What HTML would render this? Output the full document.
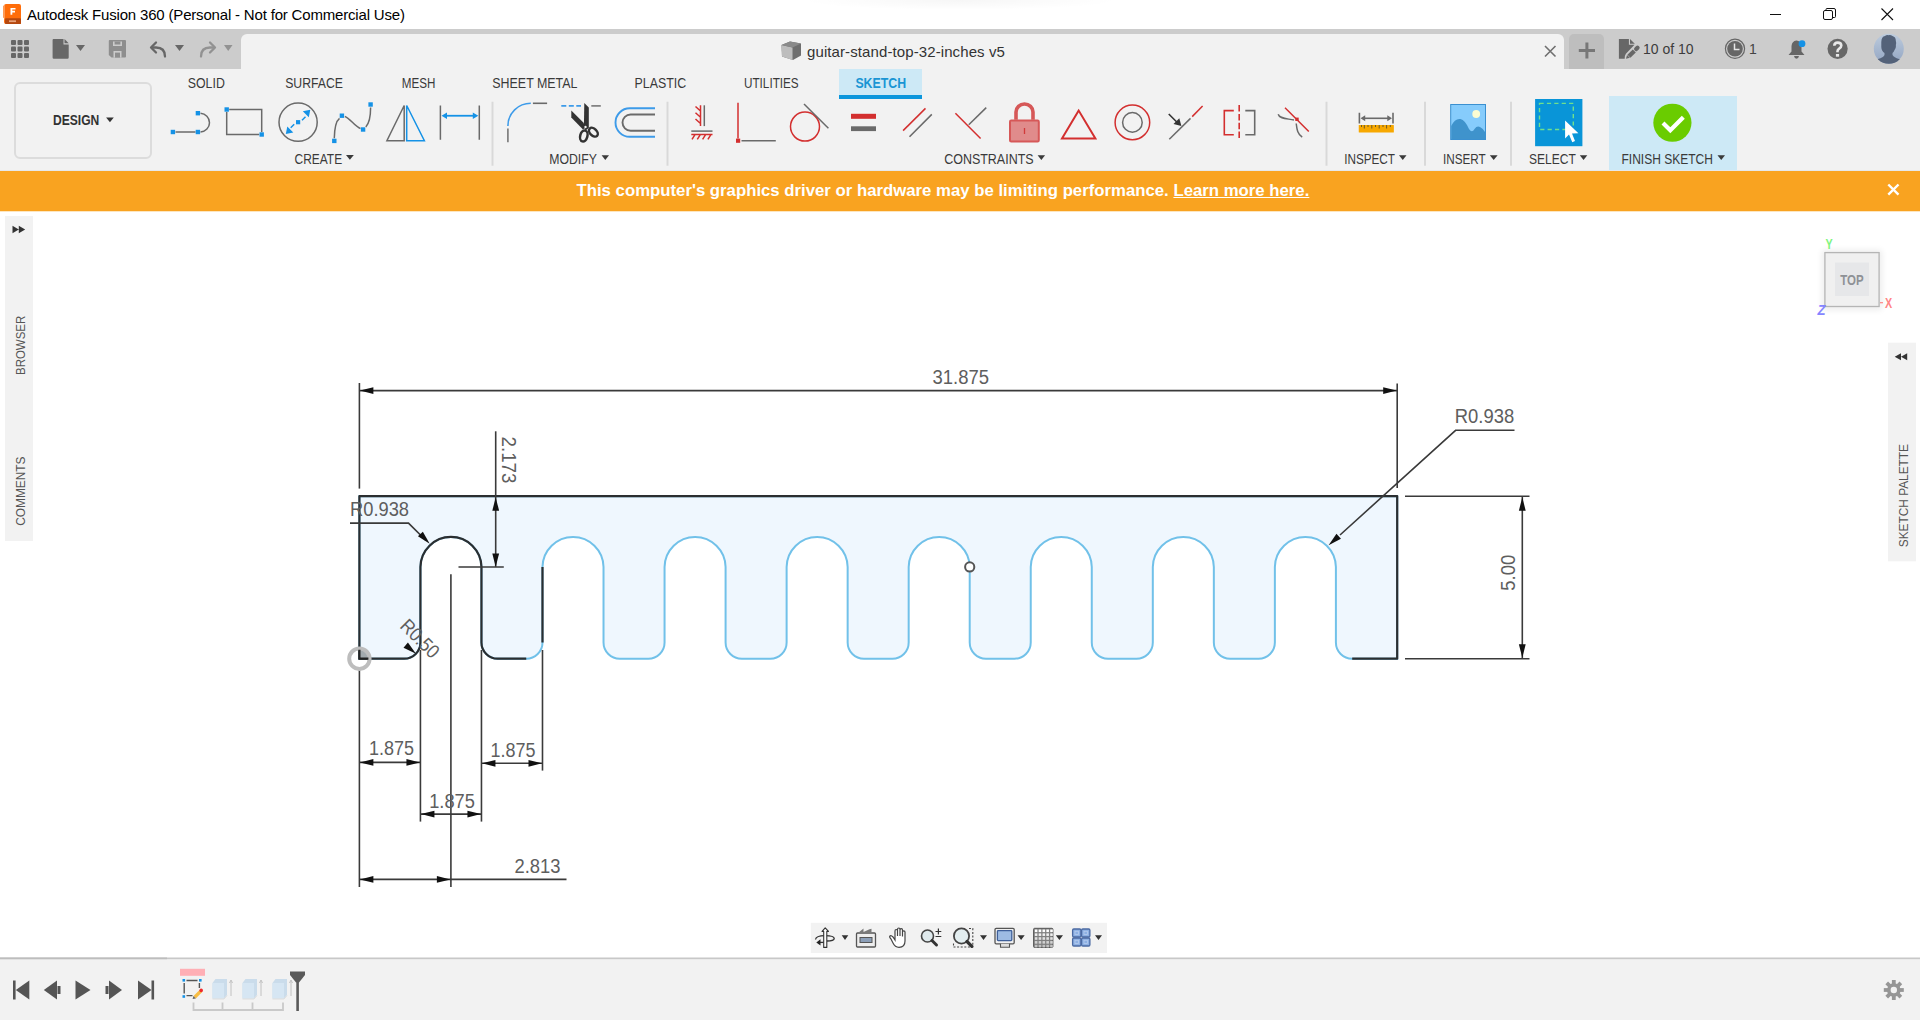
<!DOCTYPE html>
<html><head><meta charset="utf-8">
<style>
*{box-sizing:border-box}
html,body{margin:0;padding:0}
body{width:1920px;height:1020px;position:relative;overflow:hidden;background:#fff;font-family:"Liberation Sans",sans-serif;color:#3c3c3c}
.a{position:absolute}
.t{position:absolute;white-space:nowrap;line-height:1}
#title{left:0;top:0;width:1920px;height:29px;background:#fff}
#tabbar{left:0;top:29px;width:1920px;height:40px;background:#cccccc}
#doctab{left:241px;top:34px;width:1323px;height:35px;background:#f2f2f2;border-radius:6px 6px 0 0}
#plus{left:1569px;top:34px;width:35px;height:35px;background:#bebebe;border-radius:5px 5px 0 0}
#toolbar{left:0;top:69px;width:1920px;height:102px;background:#f2f2f2}
#banner{left:0;top:171px;width:1920px;height:40px;background:#f9a320}
.tab{font-size:13px;color:#3a3a3a;letter-spacing:-0.4px;top:78px}
.lbl{font-size:13px;color:#3a3a3a;letter-spacing:-0.5px;top:153px}
.sep{position:absolute;width:2px;background:#dcdcdc;top:101px;height:64px}
svg{position:absolute;overflow:visible}
</style></head>
<body>
<div id="title" class="a"></div>
<div class="a" style="left:800px;top:0;width:320px;height:10px;background:radial-gradient(ellipse 50% 100% at 50% 0%, rgba(0,0,0,0.035), rgba(0,0,0,0) 100%)"></div>
<div class="t" style="left:27px;top:7px;font-size:15px;color:#000;letter-spacing:-0.18px">Autodesk Fusion 360 (Personal - Not for Commercial Use)</div>

<div id="tabbar" class="a"></div>
<div id="doctab" class="a"></div>
<div id="plus" class="a"></div>
<div class="t" style="left:807px;top:44px;font-size:15px;color:#333;letter-spacing:0.1px">guitar-stand-top-32-inches v5</div>
<div class="t" style="left:1643px;top:42px;font-size:14px;color:#3c3c3c;">10 of 10</div>
<div class="t" style="left:1749px;top:42px;font-size:14px;color:#444;">1</div>

<svg class="a" style="left:0;top:0" width="1920" height="70">
  <!-- fusion logo -->
  <path d="M4.5 5.5 Q4 4 6 4 H19 Q21 4 21 6 V24 H6 Q4 24 4 22 Z" fill="#ff6d0a"/>
  <path d="M3 6 L5 4.5 V19 L3 17.5 Z" fill="#ff9a55"/>
  <rect x="5" y="18.3" width="16" height="5.7" rx="1" fill="#b5480f"/>
  <path d="M10.5 8 H15.5 V9.6 H12.3 V10.8 H15 V12.4 H12.3 V14.8 H10.5 Z" fill="#fff"/>
  <rect x="9" y="20.3" width="7" height="1.8" fill="#e7a27a"/>
  <!-- window controls -->
  <line x1="1770" y1="14.5" x2="1781" y2="14.5" stroke="#111" stroke-width="1"/>
  <rect x="1823.5" y="10.5" width="9" height="9" fill="none" stroke="#111" stroke-width="1" rx="1.5"/>
  <path d="M1826 10.5 V9.5 Q1826 8.5 1827 8.5 H1834 Q1835.5 8.5 1835.5 10 V16.5 Q1835.5 17.5 1834.5 17.5 H1832.5" fill="none" stroke="#111" stroke-width="1"/>
  <path d="M1881.5 8.5 L1893 20 M1893 8.5 L1881.5 20" stroke="#111" stroke-width="1.1"/>
  <!-- grid -->
  <g fill="#676767">
    <rect x="11" y="40" width="5" height="5" rx="1"/><rect x="17.5" y="40" width="5" height="5" rx="1"/><rect x="24" y="40" width="5" height="5" rx="1"/>
    <rect x="11" y="46.5" width="5" height="5" rx="1"/><rect x="17.5" y="46.5" width="5" height="5" rx="1"/><rect x="24" y="46.5" width="5" height="5" rx="1"/>
    <rect x="11" y="53" width="5" height="5" rx="1"/><rect x="17.5" y="53" width="5" height="5" rx="1"/><rect x="24" y="53" width="5" height="5" rx="1"/>
  </g>
  <!-- file -->
  <path d="M53.5 39 H63.5 V44.5 H68.7 V57.5 Q68.7 58.7 67.5 58.7 H53.8 Q52.6 58.7 52.6 57.5 V40 Q52.6 39 53.5 39 Z" fill="#676767"/>
  <path d="M64.5 39 L68.7 43.3 H64.5 Z" fill="#676767"/>
  <path d="M76 45 H85 L80.5 51 Z" fill="#676767"/>
  <!-- save -->
  <path d="M109.5 40 H125 Q126 40 126 41 V56.6 Q126 57.6 125 57.6 H111.5 L108.8 55 V41 Q108.8 40 109.5 40 Z" fill="#8e8e8e"/>
  <rect x="113" y="41.5" width="9" height="4.5" fill="#cbcbcb"/><rect x="114.6" y="41.5" width="5.8" height="3" fill="#8e8e8e"/>
  <rect x="113.5" y="51" width="8" height="6.6" fill="#cbcbcb"/><rect x="115" y="52.6" width="5" height="5" fill="#8e8e8e"/>
  <!-- undo -->
  <path d="M165 56.5 Q165 47.5 156 47.5 H152" fill="none" stroke="#676767" stroke-width="2.3" stroke-linecap="round"/>
  <path d="M156 42.5 L151 47.5 L156 52.5" fill="none" stroke="#676767" stroke-width="2.3" stroke-linecap="round" stroke-linejoin="round"/>
  <path d="M175 45 H184 L179.5 51 Z" fill="#676767"/>
  <!-- redo -->
  <path d="M201 56.5 Q201 47.5 210 47.5 H214" fill="none" stroke="#929292" stroke-width="2.3" stroke-linecap="round"/>
  <path d="M210 42.5 L215 47.5 L210 52.5" fill="none" stroke="#929292" stroke-width="2.3" stroke-linecap="round" stroke-linejoin="round"/>
  <path d="M224 45 H232.5 L228.2 51 Z" fill="#929292"/>
  <!-- doc tab cube -->
  <path d="M781.5 45 L790 41.5 L801 43.5 V55.5 L793 60 L782 56.5 Z" fill="#6e6e6e"/>
  <path d="M781.5 45 L792.5 47.5 V60 L782 56.5 Z" fill="#bdbdbd"/>
  <path d="M781.5 45 L790 41.5 L801 43.5 L792.5 47.5 Z" fill="#8a8a8a"/>
  <!-- tab close -->
  <path d="M1545 46 L1555.5 56.5 M1555.5 46 L1545 56.5" stroke="#707070" stroke-width="1.6"/>
  <!-- plus -->
  <path d="M1578.8 50.5 H1595 M1586.9 42.6 V58.5" stroke="#777" stroke-width="3"/>
  <!-- file edit icon -->
  <path d="M1618.9 39 H1628.9 V44.8 H1634.5 L1625.9 53.8 Q1624.7 55.3 1624.7 58.8 H1618.9 Z" fill="#676767"/>
  <path d="M1630 39 L1634.8 43.7 H1630 Z" fill="#676767"/>
  <path d="M1628.9 56.3 L1634.3 50.9" stroke="#676767" stroke-width="4.3"/>
  <path d="M1636.2 49.1 L1637.5 47.8" stroke="#676767" stroke-width="4.3" stroke-linecap="round"/>
  <path d="M1626 58.8 L1627 55 L1629.9 57.8 Z" fill="#676767"/>
  <!-- clock -->
  <circle cx="1735" cy="48.8" r="9.6" fill="none" stroke="#666" stroke-width="1.2"/>
  <circle cx="1735" cy="48.8" r="7.8" fill="#666"/>
  <path d="M1734.5 43.5 V49.5 H1739.5" fill="none" stroke="#e6e6e6" stroke-width="1.5"/>
  <!-- bell -->
  <path d="M1796.3 40.5 Q1792 41 1791.5 46 V51.5 L1788.5 55 H1804.5 L1801.5 51.5 V46 Q1801 41 1796.5 40.5 Z" fill="#666"/>
  <path d="M1794 56 H1799 Q1798.5 58.7 1796.5 58.7 Q1794.5 58.7 1794 56 Z" fill="#666"/>
  <circle cx="1802" cy="43.7" r="3.4" fill="#1592e6"/>
  <!-- help -->
  <circle cx="1837.6" cy="48.8" r="10.1" fill="#676767"/>
  <path d="M1834.3 45.8 Q1834.3 42.6 1837.7 42.6 Q1841.3 42.6 1841.3 45.6 Q1841.3 47.4 1839.2 48.6 Q1837.5 49.6 1837.5 51.2 V52.3" fill="none" stroke="#e8e8e8" stroke-width="2.6"/>
  <rect x="1835.9" y="54" width="3.2" height="2.7" fill="#e8e8e8"/>
  <!-- avatar -->
  <defs><clipPath id="av"><circle cx="1888.8" cy="48.8" r="15"/></clipPath>
  <linearGradient id="avg" x1="0" y1="0" x2="0" y2="1"><stop offset="0" stop-color="#bccbdd"/><stop offset="1" stop-color="#93a5c2"/></linearGradient></defs>
  <circle cx="1888.8" cy="48.8" r="15" fill="url(#avg)"/>
  <g clip-path="url(#av)" fill="#546279">
    <path d="M1881.3 42 Q1881.5 36.5 1885 36 Q1886.5 34.8 1888.5 35.2 Q1890.5 34.6 1892.5 36 Q1896 37 1895.8 41 Q1896.5 43 1895.8 45 Q1896.3 47.5 1894.8 49.5 Q1893.8 52 1892.5 53 V55 Q1894 57.5 1899 59 L1905 60 V66 H1872 V60 L1878 59 Q1883.5 57.5 1884.5 55 V53 Q1881.5 51 1881.3 47 Z"/>
  </g>
</svg>

<div id="toolbar" class="a"></div>
<div class="a" style="left:14px;top:82px;width:138px;height:77px;border:2px solid #dcdcdc;border-radius:6px"></div>

<div class="a" style="left:839px;top:69px;width:83px;height:30px;background:#cde9f6"></div>
<div class="a" style="left:839px;top:95px;width:83px;height:4px;background:#0b96dc"></div>

<div class="a" style="left:1609px;top:96px;width:128px;height:75px;background:#cde9f6"></div>


<svg class="a" style="left:0;top:0" width="1920" height="175" font-family="Liberation Sans">
<g fill="#3a3a3a" font-size="13.8">
  <text x="52.9" y="124.85" font-weight="700" font-size="13.8" textLength="46.4" lengthAdjust="spacingAndGlyphs" fill="#333">DESIGN</text>
  <path d="M106.1 117.6 H113.8 L109.95 122.2 Z" fill="#333"/>
  <text x="187.8" y="87.65" font-size="14" textLength="37" lengthAdjust="spacingAndGlyphs">SOLID</text>
  <text x="285.2" y="87.65" font-size="14" textLength="57.8" lengthAdjust="spacingAndGlyphs">SURFACE</text>
  <text x="401.7" y="87.65" font-size="14" textLength="33.6" lengthAdjust="spacingAndGlyphs">MESH</text>
  <text x="492.3" y="87.65" font-size="14" textLength="85.2" lengthAdjust="spacingAndGlyphs">SHEET METAL</text>
  <text x="634.5" y="87.65" font-size="14" textLength="51.6" lengthAdjust="spacingAndGlyphs">PLASTIC</text>
  <text x="744" y="87.65" font-size="14" textLength="54.7" lengthAdjust="spacingAndGlyphs">UTILITIES</text>
  <text x="855.4" y="87.65" font-size="14" font-weight="700" textLength="50.7" lengthAdjust="spacingAndGlyphs" fill="#1a95d4">SKETCH</text>

  <text x="294.6" y="163.75" textLength="47.5" lengthAdjust="spacingAndGlyphs">CREATE</text>
  <path d="M346 155 H353.8 L349.9 159.8 Z"/>
  <text x="549.2" y="163.75" textLength="47.7" lengthAdjust="spacingAndGlyphs">MODIFY</text>
  <path d="M601.6 155.2 H609 L605.3 159.9 Z"/>
  <text x="944.2" y="163.75" textLength="89.4" lengthAdjust="spacingAndGlyphs">CONSTRAINTS</text>
  <path d="M1037.6 155.2 H1045.1 L1041.35 159.9 Z"/>
  <text x="1344.2" y="163.75" textLength="50.8" lengthAdjust="spacingAndGlyphs">INSPECT</text>
  <path d="M1399 155.2 H1406.5 L1402.75 159.9 Z"/>
  <text x="1443" y="163.75" textLength="42.7" lengthAdjust="spacingAndGlyphs">INSERT</text>
  <path d="M1489.8 155.2 H1497.6 L1493.7 159.9 Z"/>
  <text x="1529" y="163.75" textLength="46.8" lengthAdjust="spacingAndGlyphs">SELECT</text>
  <path d="M1579.8 155.2 H1587.3 L1583.55 159.9 Z"/>
  <text x="1621.5" y="163.75" textLength="91.4" lengthAdjust="spacingAndGlyphs">FINISH SKETCH</text>
  <path d="M1717.5 155.2 H1725 L1721.25 159.9 Z"/>
</g>
<!-- CREATE icons -->
<g fill="none" stroke="#6a6a6a" stroke-width="1.5">
  <line x1="175.5" y1="132" x2="195.5" y2="132"/>
  <path d="M200.5 113.25 A9.7 9.4 0 0 1 200.5 132"/>
  <path d="M229.2 109.5 H261.7 V132 M259.2 134.5 H226.7 V112"/>
  <circle cx="298.1" cy="122.2" r="19.1"/>
  <path d="M334.3 138.3 C334.5 128 336 121 339.5 118.3"/>
  <path d="M344.8 116.5 C350 118 355 127 360.5 128.5"/>
  <path d="M365.8 127 C369.5 123 370.6 116 370.6 107.5"/>
  <path d="M404.2 105.5 L386.9 140.7 H404.2 Z"/>
  <path d="M440.4 105.5 V139.7 M479.3 105.5 V139.7"/>
</g>
<g fill="#1592e6">
  <rect x="170.7" y="129.8" width="4.4" height="4.4"/><rect x="195.7" y="129.8" width="4.4" height="4.4"/><rect x="195.7" y="111" width="4.4" height="4.4"/>
  <rect x="224.5" y="107.3" width="4.4" height="4.4"/><rect x="259.5" y="132.3" width="4.4" height="4.4"/>
  <rect x="296" y="120.1" width="4.2" height="4.2"/>
  <path d="M310.3 109.8 L308.8 117.3 L302.8 111.3 Z M285.8 134 L287.3 126.5 L293.3 132.5 Z"/>
  <rect x="332.1" y="138.7" width="4.4" height="4.4"/><rect x="339.7" y="113.5" width="4.4" height="4.4"/><rect x="360.9" y="127.3" width="4.4" height="4.4"/><rect x="368.4" y="102.3" width="4.4" height="4.4"/>
  <path d="M441.5 115.75 L447 112.6 V118.9 Z M478.3 115.75 L472.8 112.6 V118.9 Z"/>
</g>
<g fill="none" stroke="#1592e6" stroke-width="1.5">
  <path d="M302 120.3 L305.5 116.8 M294.2 124.2 L290.7 127.7"/>
  <path d="M406.7 105.5 V140.7 H424.4 Z"/>
  <line x1="446" y1="115.75" x2="474" y2="115.75" stroke-width="1.8"/>
</g>
<!-- separators -->
<g fill="#d9d9d9">
  <rect x="491.5" y="101.7" width="2" height="64"/>
  <rect x="666.5" y="101.7" width="2" height="64"/>
  <rect x="1325.5" y="101.7" width="2" height="64"/>
  <rect x="1424" y="101.7" width="2" height="64"/>
  <rect x="1510" y="101.7" width="2" height="64"/>
</g>
<!-- MODIFY icons -->
<g fill="none" stroke-width="1.6">
  <path d="M507.9 128.5 V142.2" stroke="#777"/>
  <path d="M507.9 125.9 A22.9 22.6 0 0 1 530.8 103.3" stroke="#3d9be9"/>
  <path d="M532.9 103.3 H547.1" stroke="#6a6a6a"/>
  <path d="M561.3 105.9 H581" stroke="#3d9be9" stroke-dasharray="5 2.5"/>
  <path d="M591.3 105.9 H600.8" stroke="#777"/>
  <path d="M655 108.3 H629.7 A14.2 14.25 0 0 0 629.7 136.8 H655" stroke="#3d9be9" stroke-width="1.9"/>
  <path d="M655 114.5 H630.6 A8.1 8.1 0 0 0 630.6 130.7 H655" stroke="#6a6a6a" stroke-width="1.9"/>
</g>
<g fill="#333">
  <path d="M584.3 103 L588.8 107.5 V128 L585.5 130.5 L583.9 127 Z"/>
  <path d="M571.3 110.5 L583.3 122.5 L585.8 127 L583 129.5 L571.3 117.5 Z"/>
</g>
<g fill="none" stroke="#333" stroke-width="2.5">
  <ellipse cx="583.8" cy="136" rx="3.6" ry="5.6" transform="rotate(15 583.8 136)"/>
  <ellipse cx="593.4" cy="132.2" rx="3.4" ry="5.2" transform="rotate(-45 593.4 132.2)"/>
</g>
<circle cx="585.5" cy="127" r="1.2" fill="#f1f1f1"/>
<!-- CONSTRAINT icons -->
<g fill="none" stroke="#d32f2f" stroke-width="1.5">
  <path d="M700.5 105.3 V126.1 M695.5 106.5 L700.5 111 M695.5 112.7 L700.5 117.2 M695.5 119 L700.5 123.5"/>
  <path d="M691.3 134.5 H712.5 M695 134.7 L692 139.4 M700.3 134.7 L697.3 139.4 M705.6 134.7 L702.6 139.4 M710.9 134.7 L707.9 139.4"/>
  <path d="M738 102.7 V138.5"/>
  <circle cx="805" cy="126.6" r="14.5"/>
  <path d="M903.1 130.6 L925.5 108.4"/>
  <path d="M955.4 113.3 L980.6 138.5"/>
  <path d="M1078.7 110.6 L1062 138.5 H1095.4 Z" stroke-width="2"/>
  <circle cx="1132.4" cy="122.4" r="17.3"/>
  <path d="M1192.2 116.6 L1202.6 106"/>
  <path d="M1233.8 110.6 H1224.3 V134.7 H1233.8" stroke-width="1.6"/>
  <path d="M1239.2 105.1 V139.8" stroke-dasharray="6.5 2.3" stroke-width="1.6"/>
  <path d="M1285 107.7 L1308.8 131.5"/>
</g>
<g fill="none" stroke="#6a6a6a" stroke-width="1.5">
  <path d="M704.3 105.3 V126.1"/>
  <path d="M691.3 131.1 H712.5"/>
  <path d="M741.5 140.7 H775.8"/>
  <path d="M804 104 L828.4 128.2"/>
  <path d="M909.5 136.8 L931.8 114.4"/>
  <path d="M968.75 124.8 L986.25 107.6"/>
  <circle cx="1132.4" cy="122.4" r="9.8"/>
  <path d="M1169.3 139.25 L1190.5 118.4"/>
  <path d="M1245.3 110.6 H1254.7 V134.7 H1245.3" stroke-width="1.6"/>
  <path d="M1278.2 114.3 C1279.5 119 1287 118.5 1294 120"/>
  <path d="M1296.2 123.5 C1297 130 1297.5 134 1302.2 137.2"/>
</g>
<rect x="1232.3" y="110" width="4" height="6" fill="#f1f1f1" opacity="0"/>
<rect x="736" y="138.6" width="4.2" height="4.2" fill="#d32f2f"/>
<rect x="851" y="113.8" width="25" height="5" fill="#d32f2f"/>
<rect x="851" y="126.3" width="25" height="4.8" fill="#6a6a6a"/>
<rect x="1295.3" y="117.6" width="3.4" height="3.4" fill="#d32f2f"/>
<path d="M1168.75 114 L1177 122.3" stroke="#333" stroke-width="1.6"/>
<path d="M1181.4 126.1 L1173.5 124 L1179.3 118.2 Z" fill="#333"/>
<!-- lock -->
<path d="M1016 119.7 V112 A8.5 8 0 0 1 1033 112 V119.7" fill="none" stroke="#d65858" stroke-width="3.6"/>
<rect x="1010" y="120.5" width="28.8" height="21" rx="1.2" fill="#e08b8b" stroke="#d65858" stroke-width="2"/>
<path d="M1024.5 128 V134" stroke="#d23a3a" stroke-width="1.3"/>
<!-- INSPECT -->
<g stroke="#6a6a6a" fill="none" stroke-width="1.6">
  <path d="M1359.4 112.8 V123.5 M1393 112.8 V123.5"/>
  <path d="M1364 118.3 H1388.5"/>
</g>
<path d="M1360.5 118.3 L1365.2 115.3 V121.3 Z M1392 118.3 L1387.3 115.3 V121.3 Z" fill="#6a6a6a"/>
<rect x="1358.75" y="125" width="35.1" height="7.6" rx="0.6" fill="#f7a800"/>
<g stroke="#6b5a2a" stroke-width="1">
  <path d="M1361.5 125 V127 M1364.3 125 V128.5 M1368 125 V127 M1371.8 125 V128.5 M1375.5 125 V127 M1379.2 125 V128.5 M1383 125 V127 M1386.6 125 V128.5 M1390.3 125 V127"/>
</g>
<!-- INSERT -->
<rect x="1450.7" y="104.5" width="34.8" height="35" fill="#86ccfc" stroke="#3b90d0" stroke-width="1"/>
<path d="M1451.2 126 Q1455 118 1460.5 119 Q1465 120 1469 129 Q1472 133.5 1474.5 129 Q1477 125.5 1480 127 Q1483 128.5 1485 132 V139 H1451.2 Z" fill="#3f93cc"/>
<circle cx="1476.2" cy="114" r="3.9" fill="#fcfdd2"/>
<!-- SELECT -->
<rect x="1535.1" y="99" width="47.3" height="47.2" fill="#0995d8"/>
<rect x="1539.5" y="103.4" width="33.8" height="26.1" fill="none" stroke="#70e08c" stroke-width="1.4" stroke-dasharray="4.2 3.2"/>
<path d="M1565.1 120.6 V138.4 L1569 134.6 L1572.3 142.2 L1575 141 L1572 133.5 L1578.4 133.3 Z" fill="#fff"/>
<!-- FINISH -->
<circle cx="1672.4" cy="122.75" r="19.1" fill="#6acc00"/>
<path d="M1663 123 L1670.3 130.2 L1683.3 117.2" fill="none" stroke="#fff" stroke-width="4.2"/>
</svg>

<div id="banner" class="a"></div>
<div class="a" style="left:0;top:170px;width:1920px;height:1px;background:#e6e8ea"></div>
<div class="a" style="left:0;top:211px;width:1920px;height:1px;background:#fde6c0"></div>
<div class="t" style="left:576.5px;top:183px;font-size:16.75px;font-weight:700;color:#fff">This computer's graphics driver or hardware may be limiting performance. <span style="text-decoration:underline">Learn more here.</span></div>


<svg class="a" style="left:0;top:0" width="1920" height="1020" font-family="Liberation Sans">
<path d="M359.40 496.20 H1397.20 V658.70 H1352.17 A16.27 16.27 0 0 1 1335.90 642.43 V566.93 A30.52 30.52 0 0 0 1274.87 566.93 V642.43 A16.27 16.27 0 0 1 1258.59 658.70 H1230.11 A16.27 16.27 0 0 1 1213.84 642.43 V566.93 A30.52 30.52 0 0 0 1152.81 566.93 V642.43 A16.27 16.27 0 0 1 1136.53 658.70 H1108.05 A16.27 16.27 0 0 1 1091.77 642.43 V566.93 A30.52 30.52 0 0 0 1030.74 566.93 V642.43 A16.27 16.27 0 0 1 1014.47 658.70 H985.99 A16.27 16.27 0 0 1 969.71 642.43 V566.93 A30.52 30.52 0 0 0 908.68 566.93 V642.43 A16.27 16.27 0 0 1 892.41 658.70 H863.92 A16.27 16.27 0 0 1 847.65 642.43 V566.93 A30.52 30.52 0 0 0 786.62 566.93 V642.43 A16.27 16.27 0 0 1 770.34 658.70 H741.86 A16.27 16.27 0 0 1 725.59 642.43 V566.93 A30.52 30.52 0 0 0 664.56 566.93 V642.43 A16.27 16.27 0 0 1 648.28 658.70 H619.80 A16.27 16.27 0 0 1 603.52 642.43 V566.93 A30.52 30.52 0 0 0 542.49 566.93 V642.43 A16.27 16.27 0 0 1 526.22 658.70 H497.74 A16.27 16.27 0 0 1 481.46 642.43 V566.93 A30.52 30.52 0 0 0 420.43 566.93 V642.43 A16.27 16.27 0 0 1 404.16 658.70 H359.40 Z" fill="#eff7fe" stroke="#71c1e9" stroke-width="2"/>
<path d="M1352.20 658.70 H1397.20 V496.20 H359.40 V658.70 H404.16 A16.27 16.27 0 0 0 420.43 642.43 V566.93 A30.52 30.52 0 0 1 481.46 566.93 V642.43 A16.27 16.27 0 0 0 497.74 658.70 H526.22 M542.49 566.93 V642.43" fill="none" stroke="#2b2e30" stroke-width="2.2" stroke-linejoin="round"/>
<line x1="359.40" y1="383.00" x2="359.40" y2="488.60" stroke="#3a3a3a" stroke-width="1.6"/>
<line x1="1397.20" y1="383.50" x2="1397.20" y2="488.00" stroke="#3a3a3a" stroke-width="1.6"/>
<line x1="359.40" y1="390.60" x2="1397.20" y2="390.60" stroke="#3a3a3a" stroke-width="1.6"/>
<path d="M359.90 390.60 L373.40 387.20 L373.40 394.00 Z" fill="#111"/>
<path d="M1396.70 390.60 L1383.20 394.00 L1383.20 387.20 Z" fill="#111"/>
<text x="932.50" y="383.80" font-size="19.5" fill="#5e5e5e" textLength="56.5" lengthAdjust="spacingAndGlyphs">31.875</text>
<line x1="495.70" y1="431.30" x2="495.70" y2="566.93" stroke="#3a3a3a" stroke-width="1.6"/>
<path d="M495.70 497.20 L499.10 510.70 L492.30 510.70 Z" fill="#111"/>
<path d="M495.70 566.93 L492.30 553.43 L499.10 553.43 Z" fill="#111"/>
<line x1="458.50" y1="566.93" x2="503.80" y2="566.93" stroke="#3a3a3a" stroke-width="1.6"/>
<text x="502.00" y="436.50" font-size="19.5" fill="#5e5e5e" textLength="47" lengthAdjust="spacingAndGlyphs" transform="rotate(90 502.00 436.50)">2.173</text>
<path d="M350 523.1 H408.5 L426 540.5" fill="none" stroke="#3a3a3a" stroke-width="1.6"/>
<path d="M429.70 543.80 L417.93 536.37 L422.85 531.68 Z" fill="#111"/>
<text x="350.00" y="516.30" font-size="19.5" fill="#5e5e5e" textLength="59" lengthAdjust="spacingAndGlyphs">R0.938</text>
<path d="M1514.5 430.3 H1455.6 L1340 535" fill="none" stroke="#3a3a3a" stroke-width="1.6"/>
<path d="M1328.60 545.20 L1336.46 533.71 L1340.96 538.80 Z" fill="#111"/>
<text x="1454.80" y="423.10" font-size="19.5" fill="#5e5e5e" textLength="59.4" lengthAdjust="spacingAndGlyphs">R0.938</text>
<line x1="1405.00" y1="496.20" x2="1529.50" y2="496.20" stroke="#3a3a3a" stroke-width="1.6"/>
<line x1="1405.00" y1="658.70" x2="1529.50" y2="658.70" stroke="#3a3a3a" stroke-width="1.6"/>
<line x1="1522.30" y1="496.20" x2="1522.30" y2="658.70" stroke="#3a3a3a" stroke-width="1.6"/>
<path d="M1522.30 497.20 L1525.70 510.70 L1518.90 510.70 Z" fill="#111"/>
<path d="M1522.30 657.70 L1518.90 644.20 L1525.70 644.20 Z" fill="#111"/>
<text x="1515.50" y="590.70" font-size="19.5" fill="#5e5e5e" textLength="36" lengthAdjust="spacingAndGlyphs" transform="rotate(-90 1515.50 590.70)">5.00</text>
<path d="M416.00 653.80 L403.51 647.65 L407.92 642.47 Z" fill="#111"/>
<text x="399.00" y="627.00" font-size="19.5" fill="#5e5e5e" textLength="46" lengthAdjust="spacingAndGlyphs" transform="rotate(45 399.00 627.00)">R0.50</text>
<line x1="450.90" y1="574.30" x2="450.90" y2="887.00" stroke="#3a3a3a" stroke-width="1.6"/>
<line x1="359.40" y1="667.00" x2="359.40" y2="887.00" stroke="#3a3a3a" stroke-width="1.6"/>
<line x1="420.43" y1="650.00" x2="420.43" y2="821.60" stroke="#3a3a3a" stroke-width="1.6"/>
<line x1="481.46" y1="650.00" x2="481.46" y2="821.60" stroke="#3a3a3a" stroke-width="1.6"/>
<line x1="542.49" y1="650.00" x2="542.49" y2="770.60" stroke="#3a3a3a" stroke-width="1.6"/>
<line x1="359.40" y1="762.40" x2="420.43" y2="762.40" stroke="#3a3a3a" stroke-width="1.6"/>
<path d="M359.90 762.40 L373.40 759.00 L373.40 765.80 Z" fill="#111"/>
<path d="M419.93 762.40 L406.43 765.80 L406.43 759.00 Z" fill="#111"/>
<text x="369.00" y="754.90" font-size="19.5" fill="#5e5e5e" textLength="45" lengthAdjust="spacingAndGlyphs">1.875</text>
<line x1="481.46" y1="763.30" x2="542.49" y2="763.30" stroke="#3a3a3a" stroke-width="1.6"/>
<path d="M481.96 763.30 L495.46 759.90 L495.46 766.70 Z" fill="#111"/>
<path d="M541.99 763.30 L528.49 766.70 L528.49 759.90 Z" fill="#111"/>
<text x="490.60" y="756.50" font-size="19.5" fill="#5e5e5e" textLength="45" lengthAdjust="spacingAndGlyphs">1.875</text>
<line x1="420.43" y1="814.10" x2="481.46" y2="814.10" stroke="#3a3a3a" stroke-width="1.6"/>
<path d="M420.93 814.10 L434.43 810.70 L434.43 817.50 Z" fill="#111"/>
<path d="M480.96 814.10 L467.46 817.50 L467.46 810.70 Z" fill="#111"/>
<text x="429.20" y="807.50" font-size="19.5" fill="#5e5e5e" textLength="45.7" lengthAdjust="spacingAndGlyphs">1.875</text>
<line x1="359.40" y1="879.40" x2="566.50" y2="879.40" stroke="#3a3a3a" stroke-width="1.6"/>
<path d="M359.90 879.40 L373.40 876.00 L373.40 882.80 Z" fill="#111"/>
<path d="M450.40 879.40 L436.90 882.80 L436.90 876.00 Z" fill="#111"/>
<text x="514.50" y="873.00" font-size="19.5" fill="#5e5e5e" textLength="46" lengthAdjust="spacingAndGlyphs">2.813</text>
<path d="M359.40 658.70 V648.70 A10 10 0 0 1 369.40 658.70 Z" fill="#a3aaae"/>
<circle cx="359.40" cy="658.70" r="10.2" fill="none" stroke="#bdbdbd" stroke-width="4"/>
<path d="M359.40 649.70 V658.70 H368.40" fill="none" stroke="#222" stroke-width="2.2"/>
<circle cx="969.71" cy="566.93" r="4.6" fill="#fff" stroke="#555" stroke-width="2"/>
</svg>
<svg class="a" style="left:0;top:0" width="1920" height="1020" font-family="Liberation Sans">
<!-- left panel -->
<rect x="5" y="216" width="28" height="325" fill="#f2f2f2"/>
<path d="M12.5 225.8 L18.8 229.5 L12.5 233.3 Z M18.8 225.8 L25.2 229.5 L18.8 233.3 Z" fill="#333"/>
<text transform="translate(24.8 375) rotate(-90)" font-size="13" fill="#555" textLength="59.2" lengthAdjust="spacingAndGlyphs">BROWSER</text>
<text transform="translate(24.8 525.8) rotate(-90)" font-size="13" fill="#555" textLength="69.3" lengthAdjust="spacingAndGlyphs">COMMENTS</text>
<!-- right panel -->
<rect x="1888" y="342.7" width="28" height="218.6" fill="#f2f2f2"/>
<path d="M1907.2 353.3 L1901 356.8 L1907.2 360.3 Z M1901 353.3 L1894.7 356.8 L1901 360.3 Z" fill="#333"/>
<text transform="translate(1907.6 547.2) rotate(-90)" font-size="13" fill="#555" textLength="103.2" lengthAdjust="spacingAndGlyphs">SKETCH PALETTE</text>
<!-- view cube -->
<defs><filter id="sh" x="-30%" y="-30%" width="160%" height="160%"><feGaussianBlur stdDeviation="3"/></filter></defs>
<rect x="1822" y="250" width="60" height="60" fill="#000" opacity="0.07" filter="url(#sh)"/>
<rect x="1824.9" y="252.6" width="54.2" height="53.9" fill="#f0f0f0" stroke="#b5b5b5" stroke-width="1.3"/>
<rect x="1835" y="262.5" width="34" height="33.5" fill="#e6e7e9"/>
<text x="1840.3" y="285" font-size="14.5" font-weight="700" fill="#8e9196" textLength="23.4" lengthAdjust="spacingAndGlyphs">TOP</text>
<text x="1825.4" y="248.8" font-size="15" font-weight="700" fill="#7ff47f" textLength="7.2" lengthAdjust="spacingAndGlyphs">Y</text>
<text x="1884.9" y="307.9" font-size="15" font-weight="700" fill="#ff8585" textLength="7.2" lengthAdjust="spacingAndGlyphs">X</text>
<text x="1817.4" y="315.4" font-size="15" font-weight="700" fill="#8585ff" textLength="8" lengthAdjust="spacingAndGlyphs" font-style="italic">Z</text>
<path d="M1880 302.7 H1883" stroke="#ff8585" stroke-width="1.2"/>
<!-- banner close -->
<path d="M1888.3 184.5 L1898.5 194.7 M1898.5 184.5 L1888.3 194.7" stroke="#fff" stroke-width="2.4"/>
<!-- nav bar -->
<rect x="810.8" y="922.8" width="296.2" height="30.2" fill="#f2f2f2"/>
<g fill="#333">
  <path d="M841.7 935.3 H848.3 L845 940 Z M980 935.3 H987 L983.5 940 Z M1017.5 935.3 H1024.7 L1021.1 940 Z M1055.8 935.3 H1063 L1059.4 940 Z M1095 935.3 H1102 L1098.5 940 Z"/>
</g>
<!-- orbit -->
<path d="M815.5 939.5 Q816 935.8 825 935.7 Q834.2 935.8 834.2 938.6 Q834 940.8 827 941" fill="none" stroke="#333" stroke-width="1.3"/>
<path d="M823.7 931.4 H822.1 L825.2 927.8 L828.5 931.4 H826.8 V947.4 H823.7 Z" fill="#fff" stroke="#333" stroke-width="1.1" stroke-linejoin="round"/>
<path d="M816.3 942.4 L820.5 939.3 V945.5 Z" fill="#222"/>
<path d="M820 942.4 H823.5" stroke="#333" stroke-width="1.3"/>
<!-- look at -->
<rect x="856.5" y="933" width="19" height="14" rx="1" fill="#eee" stroke="#555" stroke-width="1.3"/>
<rect x="860" y="937.5" width="12" height="5" fill="#8c9fb8" stroke="#555" stroke-width="1"/>
<path d="M858 933 L863.5 928.5 V932 L869.5 929.2 L871.5 928.8 V933 Z" fill="#7a7a7a"/>
<!-- pan hand -->
<path d="M891 939 Q889 937 890 936 Q891 935 893 937 L895 940 V931 Q895 929.5 896.2 929.5 Q897.5 929.5 897.5 931 V936 V929.5 Q897.5 928 898.8 928 Q900 928 900 929.5 V936 V930 Q900 928.7 901.3 928.7 Q902.5 928.7 902.5 930 V936.5 V932 Q902.5 930.8 903.7 930.8 Q905 930.8 905 932 V941 Q905 947.3 899 947.3 Q895 947.3 893 943 Z" fill="#fff" stroke="#444" stroke-width="1.2"/>
<!-- zoom -->
<circle cx="927.5" cy="936" r="6" fill="#dfe9ec" stroke="#444" stroke-width="1.6"/>
<path d="M932 940.5 L936.5 945" stroke="#333" stroke-width="3" stroke-linecap="round"/>
<path d="M935.5 931.5 H941.3 M938.4 928.6 V934.4 M935.5 936.5 H941.3" stroke="#333" stroke-width="1.2"/>
<!-- fit zoom -->
<path d="M969 928.5 H972.8 V947 H953.5 V943" fill="none" stroke="#444" stroke-width="1.1" stroke-dasharray="2 1.6"/>
<circle cx="961.5" cy="936" r="7.6" fill="#e3eef0" stroke="#444" stroke-width="1.8"/>
<path d="M967 941.5 L971.8 946.3" stroke="#333" stroke-width="3.2" stroke-linecap="round"/>
<!-- display -->
<rect x="995" y="928.3" width="19.2" height="15.5" rx="1.2" fill="#f0f0f0" stroke="#555" stroke-width="1.3"/>
<rect x="997.4" y="930.6" width="14.4" height="10" rx="0.8" fill="#9dbbe3" stroke="#3e5f9a" stroke-width="1.3"/>
<path d="M1000.5 943.8 V947.3 H1009.5 V943.8" fill="#ddd" stroke="#555" stroke-width="1.1"/>
<!-- grid -->
<rect x="1033.6" y="928.3" width="19.3" height="19.2" rx="1" fill="#808080" stroke="#555" stroke-width="1"/>
<rect x="1034.80" y="929.50" width="2.6" height="2.6" fill="#fff" opacity="1.00"/><rect x="1034.80" y="933.35" width="2.6" height="2.6" fill="#fff" opacity="0.88"/><rect x="1034.80" y="937.20" width="2.6" height="2.6" fill="#fff" opacity="0.76"/><rect x="1034.80" y="941.05" width="2.6" height="2.6" fill="#fff" opacity="0.64"/><rect x="1034.80" y="944.90" width="2.6" height="2.6" fill="#fff" opacity="0.52"/><rect x="1038.65" y="929.50" width="2.6" height="2.6" fill="#fff" opacity="1.00"/><rect x="1038.65" y="933.35" width="2.6" height="2.6" fill="#fff" opacity="0.88"/><rect x="1038.65" y="937.20" width="2.6" height="2.6" fill="#fff" opacity="0.76"/><rect x="1038.65" y="941.05" width="2.6" height="2.6" fill="#fff" opacity="0.64"/><rect x="1038.65" y="944.90" width="2.6" height="2.6" fill="#fff" opacity="0.52"/><rect x="1042.50" y="929.50" width="2.6" height="2.6" fill="#fff" opacity="1.00"/><rect x="1042.50" y="933.35" width="2.6" height="2.6" fill="#fff" opacity="0.88"/><rect x="1042.50" y="937.20" width="2.6" height="2.6" fill="#fff" opacity="0.76"/><rect x="1042.50" y="941.05" width="2.6" height="2.6" fill="#fff" opacity="0.64"/><rect x="1042.50" y="944.90" width="2.6" height="2.6" fill="#fff" opacity="0.52"/><rect x="1046.35" y="929.50" width="2.6" height="2.6" fill="#fff" opacity="1.00"/><rect x="1046.35" y="933.35" width="2.6" height="2.6" fill="#fff" opacity="0.88"/><rect x="1046.35" y="937.20" width="2.6" height="2.6" fill="#fff" opacity="0.76"/><rect x="1046.35" y="941.05" width="2.6" height="2.6" fill="#fff" opacity="0.64"/><rect x="1046.35" y="944.90" width="2.6" height="2.6" fill="#fff" opacity="0.52"/><rect x="1050.20" y="929.50" width="2.6" height="2.6" fill="#fff" opacity="1.00"/><rect x="1050.20" y="933.35" width="2.6" height="2.6" fill="#fff" opacity="0.88"/><rect x="1050.20" y="937.20" width="2.6" height="2.6" fill="#fff" opacity="0.76"/><rect x="1050.20" y="941.05" width="2.6" height="2.6" fill="#fff" opacity="0.64"/><rect x="1050.20" y="944.90" width="2.6" height="2.6" fill="#fff" opacity="0.52"/>
<!-- viewports -->
<g fill="#8db0e3" stroke="#4b6aa3" stroke-width="1.3">
  <rect x="1072.6" y="929" width="8.3" height="8" rx="1.2"/><rect x="1081.6" y="929" width="8.3" height="8" rx="1.2"/>
  <rect x="1072.6" y="938" width="8.3" height="8" rx="1.2"/><rect x="1081.6" y="938" width="8.3" height="8" rx="1.2"/>
</g>
<g fill="none" stroke="#b5cbee" stroke-width="0.8">
  <rect x="1075" y="931.3" width="3.5" height="3.2"/><rect x="1084" y="931.3" width="3.5" height="3.2"/>
  <rect x="1075" y="940.3" width="3.5" height="3.2"/><rect x="1084" y="940.3" width="3.5" height="3.2"/>
</g>
<!-- timeline -->
<rect x="0" y="957.5" width="1920" height="2" fill="#c8c8c8"/>
<rect x="0" y="957.5" width="167" height="2" fill="#bdbdbd"/>
<rect x="0" y="959.5" width="1920" height="60.5" fill="#f2f2f2"/>
<g fill="#555">
  <rect x="13" y="980.5" width="2.6" height="19"/><path d="M29.3 980.5 V999.5 L15.8 990 Z"/>
  <path d="M57 980.5 V999.5 L43.8 990 Z"/><rect x="57.5" y="986" width="3" height="8"/>
  <path d="M75.5 980.5 L90.5 990 L75.5 999.5 Z"/>
  <rect x="105.5" y="986" width="3" height="8"/><path d="M109 980.5 L122 990 L109 999.5 Z"/>
  <path d="M138 980.5 L151.5 990 L138 999.5 Z"/><rect x="151.5" y="980.5" width="2.6" height="19"/>
</g>
<rect x="180" y="968.8" width="25" height="7" fill="#ffafb5"/>
<!-- sketch feature icon -->
<path d="M186.5 980.5 H197.5 M184.2 983 V993.5 M199.4 983 V988 M186.5 995.6 H192.5" fill="none" stroke="#555" stroke-width="1.4"/>
<g fill="#1592e6"><rect x="182.5" y="979" width="2.6" height="2.6"/><rect x="199" y="979" width="2.6" height="2.6"/><rect x="182.5" y="995.2" width="2.6" height="2.6"/></g>
<path d="M193.5 996 L199.8 989.7 L202.2 992.1 L195.9 998.4 Z" fill="#f7bd45"/>
<path d="M193.5 996 L192.6 998.9 L195.9 998.4 Z" fill="#666"/>
<circle cx="201.2" cy="990.4" r="1.8" fill="#ee2b2b"/>
<!-- extrude icons -->
<g>
  <path d="M212.5 983 L215.5 979 H227 V995 L224 998.5 H212.5 Z" fill="#c5d9ea" opacity="0.9"/>
  <path d="M212.5 983 H224 V998.5 H212.5 Z" fill="#d6e6f3"/>
  <path d="M212.5 999 H224 L227 995.5" fill="none" stroke="#ddd" stroke-width="1"/>
  <path d="M231 981.5 V996 M229.5 983 L231 980 L232.5 983" fill="none" stroke="#bbb" stroke-width="0.9"/>
  <path d="M242.5 983 L245.5 979 H257 V995 L254 998.5 H242.5 Z" fill="#c5d9ea" opacity="0.9"/>
  <path d="M242.5 983 H254 V998.5 H242.5 Z" fill="#d6e6f3"/>
  <path d="M242.5 999 H254 L257 995.5" fill="none" stroke="#ddd" stroke-width="1"/>
  <path d="M261 981.5 V996 M259.5 983 L261 980 L262.5 983" fill="none" stroke="#bbb" stroke-width="0.9"/>
  <path d="M272.5 983 L275.5 979 H287 V995 L284 998.5 H272.5 Z" fill="#c5d9ea" opacity="0.9"/>
  <path d="M272.5 983 H284 V998.5 H272.5 Z" fill="#d6e6f3"/>
  <path d="M272.5 999 H284 L287 995.5" fill="none" stroke="#ddd" stroke-width="1"/>
  <path d="M291 981.5 V996 M289.5 983 L291 980 L292.5 983" fill="none" stroke="#bbb" stroke-width="0.9"/>
</g>
<path d="M193.5 1002.5 V1010 H283 V1002.5 M222.5 1002.5 V1010 M252.5 1002.5 V1010" fill="none" stroke="#c9c9c9" stroke-width="1.8"/>
<path d="M290 971.5 H305 V975 L299 982.5 H296 L290 975 Z" fill="#5a5a5a"/>
<rect x="296.3" y="980" width="2.6" height="31" fill="#5a5a5a"/>
<!-- gear -->
<g fill="#969696" transform="translate(1893.8 990)">
  <circle r="6.8"/>
  <rect x="-1.9" y="-10" width="3.8" height="20"/>
  <rect x="-1.9" y="-10" width="3.8" height="20" transform="rotate(45)"/>
  <rect x="-1.9" y="-10" width="3.8" height="20" transform="rotate(90)"/>
  <rect x="-1.9" y="-10" width="3.8" height="20" transform="rotate(135)"/>
  <circle r="3.2" fill="#f2f2f2"/>
</g>
</svg>

</body></html>
